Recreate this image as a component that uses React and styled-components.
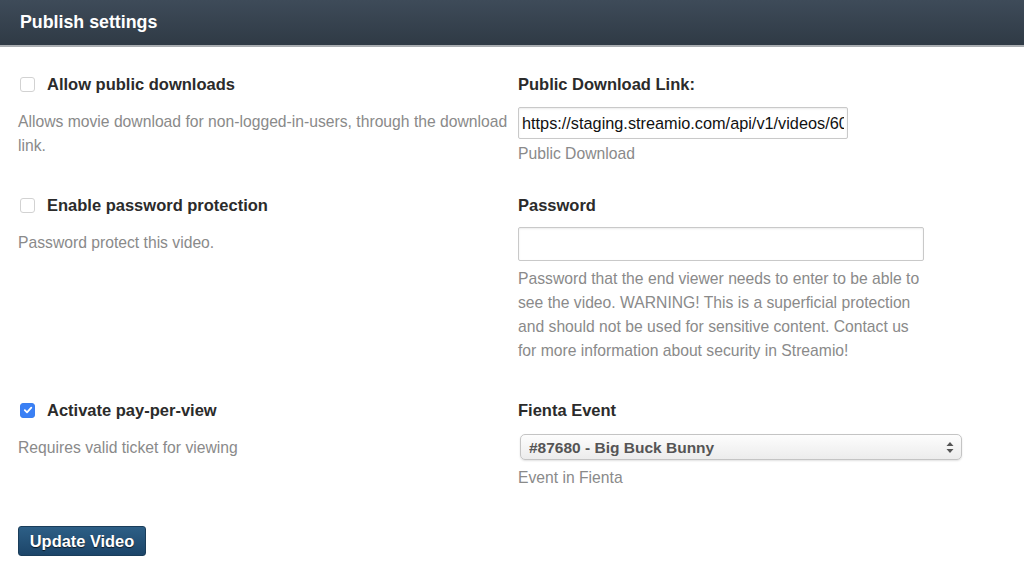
import styled, { createGlobalStyle } from "styled-components";

const GlobalStyle = createGlobalStyle`
  html, body {
    margin: 0;
    padding: 0;
    background: #fff;
    font-family: "Liberation Sans", Arial, sans-serif;
  }
`;

const Page = styled.div`
  width: 1024px;
  height: 564px;
  overflow: hidden;
`;

const Header = styled.div`
  height: 45px;
  background: linear-gradient(#3e4b59, #2f3a45);
  border-bottom: 2px solid #a9adb1;
  display: flex;
  align-items: center;
  padding-left: 20px;
`;

const Title = styled.h2`
  margin: 0;
  color: #fff;
  font-size: 17.8px;
  font-weight: bold;
`;

const Body = styled.div`
  padding: 27px 18px 0 18px;
`;

const Row = styled.div`
  display: grid;
  grid-template-columns: 500px 1fr;
  margin-bottom: ${(p) => p.$gap || 0}px;
`;

const Field = styled.div`
  display: flex;
  flex-direction: column;
  align-items: flex-start;
`;

const LabelLine = styled.label`
  display: flex;
  align-items: center;
  height: 20px;
  font-size: 16.5px;
  font-weight: bold;
  color: #2b2b2b;
  padding-left: ${(p) => (p.$indent ? 2 : 0)}px;
`;

const Box = styled.span`
  width: 13px;
  height: 13px;
  border-radius: 3px;
  border: 1px solid ${(p) => (p.$checked ? "#3a7ff0" : "#d2d2d2")};
  background: ${(p) => (p.$checked ? "#3a80f5" : "#fff")};
  margin-right: 12px;
  display: flex;
  align-items: center;
  justify-content: center;
  box-sizing: content-box;
`;

const Help = styled.p`
  margin: ${(p) => p.$top || 0}px 0 0 0;
  font-size: 15.7px;
  line-height: 24px;
  color: #8a8a8a;
  max-width: ${(p) => p.$max || 500}px;
`;

const TextInput = styled.input`
  margin-top: ${(p) => p.$top}px;
  width: ${(p) => p.$w}px;
  height: ${(p) => p.$h}px;
  box-sizing: border-box;
  border: 1px solid #c9c9c9;
  border-radius: 2px;
  box-shadow: inset 0 1px 2px rgba(0, 0, 0, 0.08);
  padding: 0 3px;
  font-family: "Liberation Sans", Arial, sans-serif;
  font-size: 16.3px;
  color: #111;
  outline: none;
`;

const SelectWrap = styled.div`
  position: relative;
  margin-top: 14px;
  margin-left: 2px;
  width: 442px;
  height: 26px;
`;

const Select = styled.select`
  appearance: none;
  width: 100%;
  height: 100%;
  box-sizing: border-box;
  border: 1px solid #c4c4c4;
  border-radius: 5px;
  background: linear-gradient(#fdfdfd, #ececec);
  box-shadow: 0 1px 2px rgba(0, 0, 0, 0.12);
  padding: 0 24px 0 8px;
  font-family: "Liberation Sans", Arial, sans-serif;
  font-size: 15.5px;
  font-weight: bold;
  color: #555;
`;

const Arrows = styled.svg`
  position: absolute;
  right: 8px;
  top: 8px;
  pointer-events: none;
`;

const Button = styled.button`
  margin-top: 36px;
  width: 128px;
  height: 30px;
  padding: 0;
  border: 1px solid #1a3d5a;
  border-radius: 3px;
  background: linear-gradient(#2d5f86, #1c4569);
  color: #fff;
  font-family: "Liberation Sans", Arial, sans-serif;
  font-size: 16.4px;
  font-weight: bold;
  text-shadow: 0 1px 1px rgba(0, 0, 0, 0.7);
  cursor: pointer;
`;

const Check = ({ checked }) => (
  <Box $checked={checked}>
    {checked && (
      <svg width="10" height="10" viewBox="0 0 10 10">
        <path d="M1.8 5.2 L4 7.4 L8.3 2.6" fill="none" stroke="#fff" strokeWidth="1.8" strokeLinecap="round" strokeLinejoin="round" />
      </svg>
    )}
  </Box>
);

const App = () => {
  return (
    <Page>
      <GlobalStyle />
      <Header>
        <Title>Publish settings</Title>
      </Header>
      <Body>
        <Row $gap={29}>
          <Field>
            <LabelLine $indent>
              <Check />
              Allow public downloads
            </LabelLine>
            <Help $top={16}>
              Allows movie download for non-logged-in-users, through the download link.
            </Help>
          </Field>
          <Field>
            <LabelLine>Public Download Link:</LabelLine>
            <TextInput
              $top={13}
              $w={330}
              $h={32}
              readOnly
              value="https://staging.streamio.com/api/v1/videos/60a1b2c3d4e5f6/public_download"
            />
            <Help $top={3}>Public Download</Help>
          </Field>
        </Row>
        <Row $gap={37}>
          <Field>
            <LabelLine $indent>
              <Check />
              Enable password protection
            </LabelLine>
            <Help $top={16}>Password protect this video.</Help>
          </Field>
          <Field>
            <LabelLine>Password</LabelLine>
            <TextInput $top={12} $w={406} $h={34} type="password" />
            <Help $top={6} $max={406}>
              Password that the end viewer needs to enter to be able to see the video.
              WARNING! This is a superficial protection and should not be used for
              sensitive content. Contact us for more information about security in
              Streamio!
            </Help>
          </Field>
        </Row>
        <Row>
          <Field>
            <LabelLine $indent>
              <Check checked />
              Activate pay-per-view
            </LabelLine>
            <Help $top={16}>Requires valid ticket for viewing</Help>
          </Field>
          <Field>
            <LabelLine>Fienta Event</LabelLine>
            <SelectWrap>
              <Select defaultValue="87680">
                <option value="87680">#87680 - Big Buck Bunny</option>
              </Select>
              <Arrows width="8" height="11" viewBox="0 0 8 11">
                <path d="M4 0 L7.5 4 L0.5 4 Z" fill="#555" />
                <path d="M4 11 L7.5 7 L0.5 7 Z" fill="#555" />
              </Arrows>
            </SelectWrap>
            <Help $top={6}>Event in Fienta</Help>
          </Field>
        </Row>
        <Button>Update Video</Button>
      </Body>
    </Page>
  );
};

export default App;
